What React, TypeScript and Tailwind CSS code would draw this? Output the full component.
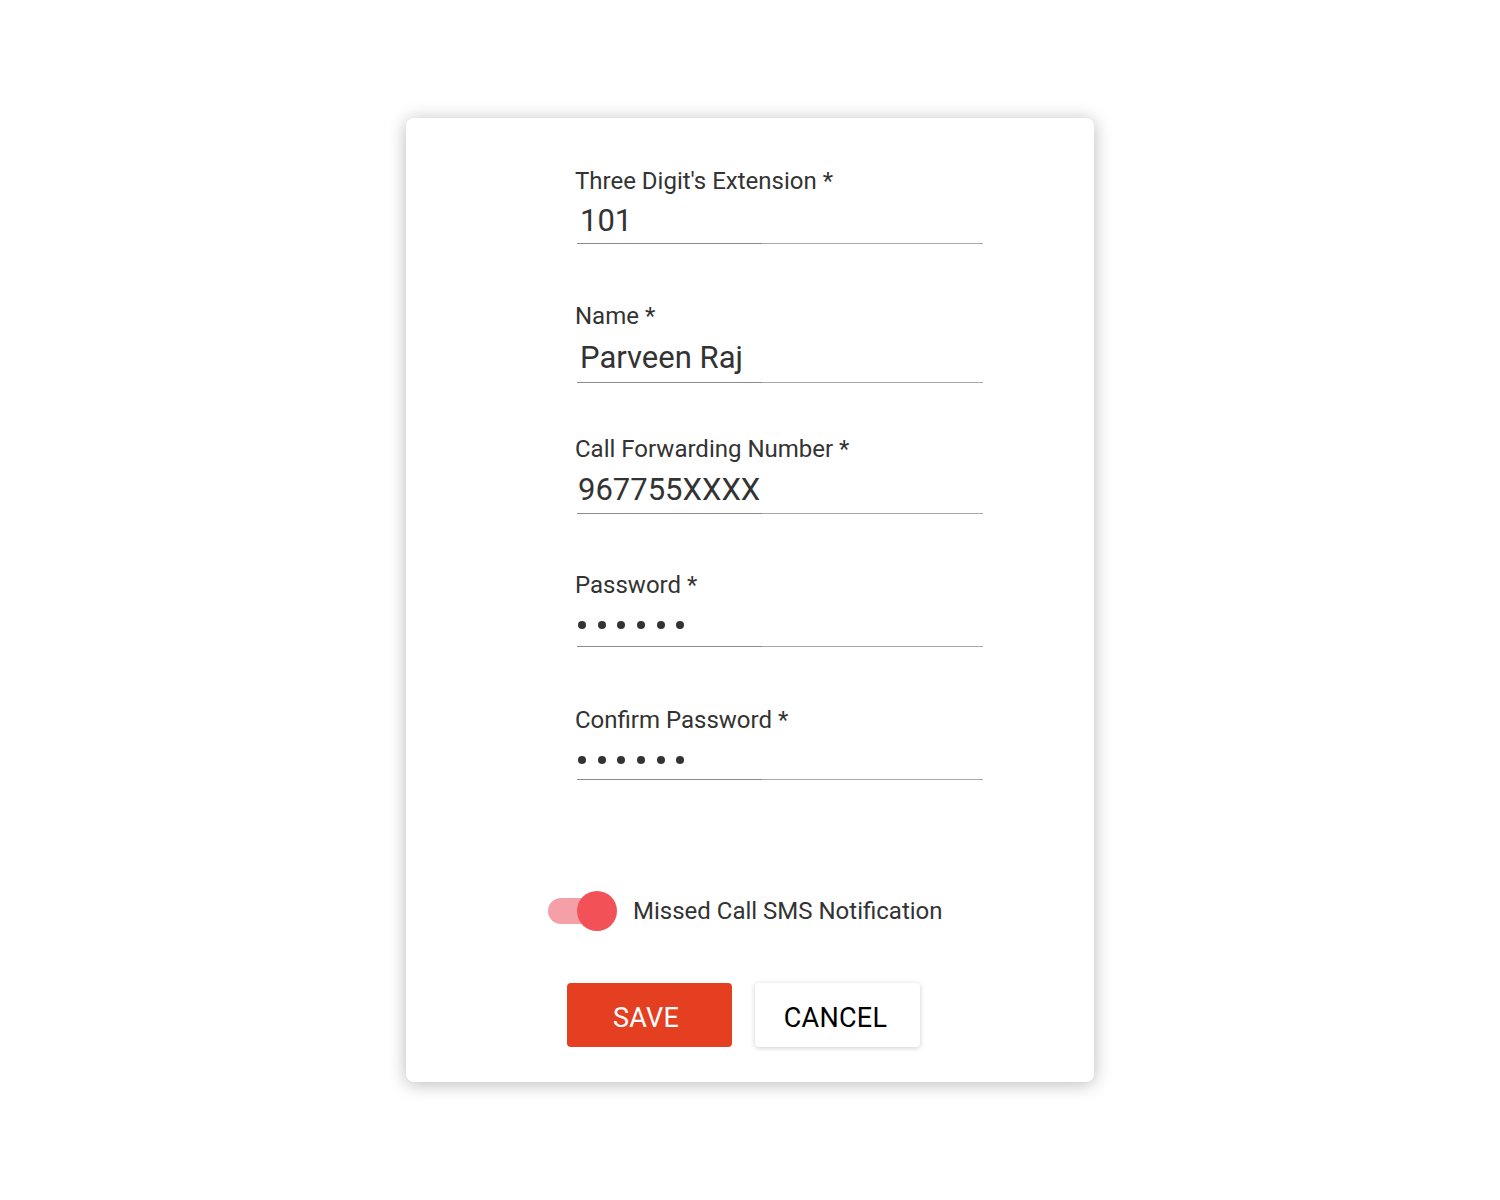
import React from 'react';

interface FieldProps {
    label: string;
    value?: string;
    masked?: number;
    className?: string;
    boxClassName: string;
}

const Field: React.FC<FieldProps> = ({ label, value, masked, className, boxClassName }) => {
    return (
        <div className={`flex flex-col ${className ?? ''}`}>
            <label className="text-[24px] leading-[26px] text-[#333]">{label}</label>
            <div className={`ml-[2px] mt-[4px] flex items-center ${boxClassName}`}>
                {masked ? (
                    <div className="flex items-center gap-[11.7px]">
                        {Array.from({ length: masked }).map((_, i) => (
                            <span key={i} className="w-[8px] h-[8px] rounded-full bg-[#333]" />
                        ))}
                    </div>
                ) : (
                    <span className="text-[31px] leading-[40px] text-[#333]">{value}</span>
                )}
            </div>
            {/* underline */}
            <div className="ml-[2px] flex w-[406px] h-px">
                <div className="w-[185px] bg-[#8c8c8c]" />
                <div className="flex-1 bg-[#a8a8a8]" />
            </div>
        </div>
    );
};

export default function App() {
    return (
        <div className="min-h-[1200px] bg-white flex justify-center pt-[118px]" style={{ fontFamily: 'Roboto, "Noto Sans", sans-serif' }}>
            <div className="w-[688px] h-[964px] bg-white rounded-[8px] shadow-[0_2px_18px_rgba(0,0,0,0.28)] flex flex-col">
                {/* Fields */}
                <div className="pl-[169px] pt-[50px] flex flex-col">
                    <Field label="Three Digit's Extension *" value="101" boxClassName="h-[45px] pl-[3px]" />
                    <Field label="Name *" value="Parveen Raj" className="mt-[59px]" boxClassName="h-[49px] pl-[3px]" />
                    <Field label="Call Forwarding Number *" value="967755XXXX" className="mt-[53px]" boxClassName="h-[47px] pl-[1px]" />
                    <Field label="Password *" masked={6} className="mt-[58px]" boxClassName="h-[44px] pl-[1px] pt-[2px]" />
                    <Field label="Confirm Password *" masked={6} className="mt-[60px]" boxClassName="h-[42px] pl-[1px] pt-[4px]" />
                </div>

                {/* Toggle */}
                <div className="pl-[142px] mt-[111px] flex items-center gap-[16px]">
                    <div className="relative w-[69px] h-[40px] flex items-center">
                        <div className="w-[55px] h-[26px] rounded-full bg-[#f5a0a6]" />
                        <div className="absolute right-0 top-0 w-[40px] h-[40px] rounded-full bg-[#f25157]" />
                    </div>
                    <span className="text-[24px] leading-[28px] text-[#333]">Missed Call SMS Notification</span>
                </div>

                {/* Buttons */}
                <div className="pl-[161px] mt-[52px] flex items-center gap-[23px]">
                    <button className="w-[165px] h-[64px] pr-[7px] pt-[7px] rounded-[4px] bg-[#e53f22] text-white text-[27px] tracking-[0.3px]">
                        SAVE
                    </button>
                    <button className="w-[165px] h-[64px] pr-[4px] pt-[6px] rounded-[4px] bg-white text-black text-[27px] tracking-[0.3px] shadow-[0_1px_5px_rgba(0,0,0,0.2)]">
                        CANCEL
                    </button>
                </div>
            </div>
        </div>
    );
}
